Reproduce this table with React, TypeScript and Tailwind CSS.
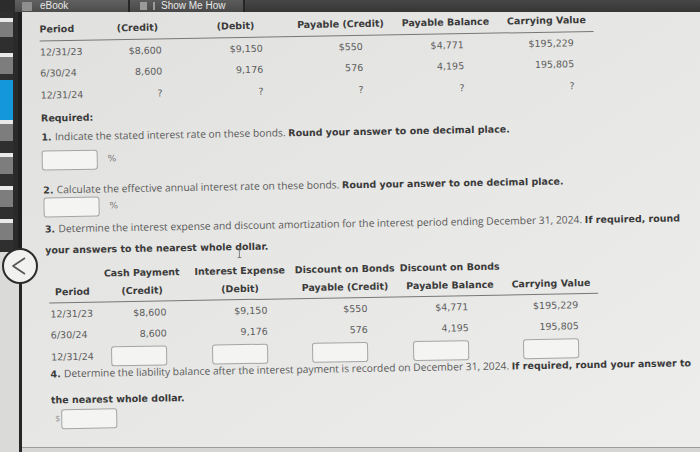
import React from 'react';

const strip: [string, number][] = [
  ['#2f2f2f', 6], ['#e9e9e9', 4], ['#7d7d7d', 15], ['#2f2f2f', 16],
  ['#e9e9e9', 4], ['#7d7d7d', 17], ['#2f2f2f', 6], ['#1597dc', 40],
  ['#e9e9e9', 4], ['#7d7d7d', 17], ['#2f2f2f', 12], ['#e9e9e9', 4],
  ['#7d7d7d', 17], ['#2f2f2f', 12], ['#e9e9e9', 4], ['#7d7d7d', 17],
  ['#2f2f2f', 12], ['#e9e9e9', 4], ['#7d7d7d', 17],
];

const grid = 'grid grid-cols-[54px_88px_108px_102px_108px_94px]';
const pads = ['', 'pr-[20px]', 'pr-[27px]', 'pr-[29px]', 'pr-[36px]', 'pr-[20px]'];

function Box({ className = '' }: { className?: string }) {
  return (
    <div
      className={`h-[20px] w-[56px] rounded-[3px] border border-[#a5a5a5] bg-[#f4f4f3] ${className}`}
    />
  );
}

function Head({ children }: { children: React.ReactNode }) {
  return (
    <div className="flex justify-center whitespace-nowrap font-bold text-[9.5px] text-[#3b3b3b]">
      {children}
    </div>
  );
}

function DataRow({ date, cells, datePad }: { date: string; cells: React.ReactNode[]; datePad: string }) {
  return (
    <div className={`${grid} h-[21.5px] items-center text-[9.5px] text-[#5c5c5c]`}>
      <div className={datePad}>{date}</div>
      {cells.map((c, i) => (
        <div key={i} className={`flex justify-end ${pads[i + 1]}`}>
          {c}
        </div>
      ))}
    </div>
  );
}

const q4 = ['Determine the ', 'liability balance ', 'after the interest ', 'payment is recorded ', 'on December 31, 2024. '];

export default function App() {
  return (
    <div className="flex h-[452px] w-[700px] flex-col overflow-hidden bg-[#2f2f2f] font-['DejaVu_Sans',sans-serif]">
      {/* top tab bar */}
      <div className="flex h-[12px] shrink-0 items-center overflow-hidden bg-gradient-to-b from-[#4a4a4a] to-[#333333] font-['Liberation_Sans',sans-serif] text-[10px] leading-[12px] text-[#e8e8e8]">
        <div className="h-full w-[15px] bg-[#2c2c2c]" />
        <div className="flex h-full w-[115px] items-center gap-[8px] border-r-2 border-[#262626] bg-gradient-to-b from-[#616161] to-[#4c4c4c] pl-[7px]">
          <div className="h-[9px] w-[10px] rounded-[1px] bg-[#8f8f8f]" />
          <span>eBook</span>
        </div>
        <div className="flex h-full w-[115px] items-center gap-[6px] border-r-2 border-[#262626] bg-gradient-to-b from-[#5c5c5c] to-[#484848] pl-[10px]">
          <div className="h-[8px] w-[7px] bg-[#9a9a9a]" />
          <div className="h-[8px] w-[2px] bg-[#9a9a9a]" />
          <span>Show Me How</span>
        </div>
        <div className="h-full flex-1 bg-gradient-to-b from-[#474747] to-[#363636]" />
      </div>

      <div className="relative flex flex-1">
        {/* left navigation strip */}
        <div className="flex w-[22px] shrink-0 flex-col">
          <div className="flex h-[240px]">
            <div className="flex w-[13px] flex-col">
              {strip.map(([c, h], i) => (
                <div key={i} style={{ background: c, height: h }} />
              ))}
              <div className="flex-1 bg-[#2f2f2f]" />
            </div>
            <div className="w-[5px] bg-[#2a2a2a]" />
            <div className="w-[4px] bg-[#1f1f1f]" />
          </div>
          <div className="flex flex-1">
            <div className="w-[19px] bg-[#dadad8]" />
            <div className="w-[3px] bg-[#262626]" />
          </div>
        </div>

        {/* collapse button */}
        <div className="absolute left-[2px] top-[236px] z-10 h-[36px] w-[36px] rounded-full border-2 border-[#2c2c2c] bg-[#f1f1f0]">
          <svg width="36" height="36" viewBox="0 0 36 36" className="absolute -left-[2px] -top-[2px]">
            <polyline points="23,10 11,18 23,26" fill="none" stroke="#555" strokeWidth="1.6" strokeLinejoin="round" />
          </svg>
        </div>

        {/* content */}
        <div className="flex flex-1 flex-col">
          <div className="relative flex-1 overflow-hidden bg-gradient-to-br from-[#e0e0de] via-[#e7e7e5] to-[#ededec]">
            <div className="h-full w-full origin-center -rotate-1 pl-[21px] pt-[2px]">
              {/* first table */}
              <div className="w-[554px]">
                <div className={`${grid} h-[20px] items-center`}>
                  <div className="font-bold text-[9.5px] text-[#3b3b3b]">Period</div>
                  <Head>(Credit)</Head>
                  <Head>(Debit)</Head>
                  <Head>Payable (Credit)</Head>
                  <Head>Payable Balance</Head>
                  <Head>Carrying Value</Head>
                </div>
                <div className="mt-[1px] h-px bg-[#777]" />
                <DataRow datePad="" date="12/31/23" cells={['$8,600', '$9,150', '$550', '$4,771', '$195,229']} />
                <DataRow datePad="" date="6/30/24" cells={['8,600', '9,176', '576', '4,195', '195,805']} />
                <DataRow datePad="" date="12/31/24" cells={['?', '?', '?', '?', '?']} />
              </div>

              <div className="mt-[4px] h-[16px] font-bold text-[9.5px] leading-[16px] text-[#3a3a3a]">Required:</div>

              <div className="mt-[1px] h-[16px] whitespace-nowrap leading-[16px] text-[#5a5a5a]">
                <span className="font-bold text-[9.5px] text-[#3a3a3a]">1. </span>
                <span className="font-['Open_Sans',sans-serif] text-[10.3px]">Indicate the stated interest rate on these bonds. </span>
                <span className="font-bold text-[9.5px] text-[#3a3a3a]">Round your answer to one decimal place.</span>
              </div>
              <div className="mt-[7px] flex items-center gap-[10px] text-[9px] text-[#777]">
                <Box />
                <span>%</span>
              </div>

              <div className="mt-[10.5px] h-[16px] whitespace-nowrap pl-[1px] leading-[16px] text-[#5a5a5a]">
                <span className="font-bold text-[9.5px] text-[#3a3a3a]">2. </span>
                <span className="font-['Open_Sans',sans-serif] text-[10.3px]">Calculate the effective annual interest rate on these bonds. </span>
                <span className="font-bold text-[9.5px] text-[#3a3a3a]">Round your answer to one decimal place.</span>
              </div>
              <div className="mt-[1px] flex items-center gap-[10px] pl-[1px] text-[9px] text-[#777]">
                <Box />
                <span>%</span>
              </div>

              <div className="mt-[2px] h-[16px] whitespace-nowrap pl-[2px] leading-[16px] text-[#5a5a5a]">
                <span className="font-bold text-[9.5px] text-[#3a3a3a]">3. </span>
                <span className="font-['Open_Sans',sans-serif] text-[10.3px]">
                  Determine the interest expense and discount amortization for the interest period ending December 31, 2024.{' '}
                </span>
                <span className="font-bold text-[9.5px] text-[#3a3a3a]">If required, round</span>
              </div>
              <div className="mt-[7px] h-[16px] whitespace-nowrap pl-[2px] font-bold text-[9.5px] leading-[16px] text-[#3a3a3a]">
                your answers to the nearest whole{' '}
                <span className="relative">
                  dollar.
                  <svg width="6" height="10" viewBox="0 0 6 10" className="absolute left-[1px] top-[7px]">
                    <path d="M1 0.5h4M3 0.5v9M1 9.5h4" stroke="#666" strokeWidth="0.8" fill="none" />
                  </svg>
                </span>
              </div>

              {/* second table */}
              <div className="mt-[8px] w-[554px]">
                <div className={`${grid} h-[16px] items-center`}>
                  <div />
                  <Head>Cash Payment</Head>
                  <Head>Interest Expense</Head>
                  <Head>Discount on Bonds</Head>
                  <Head>Discount on Bonds</Head>
                  <div />
                </div>
                <div className={`${grid} mt-[2px] h-[16px] items-center`}>
                  <div className="pl-[11px] font-bold text-[9.5px] text-[#3b3b3b]">Period</div>
                  <Head>(Credit)</Head>
                  <Head>(Debit)</Head>
                  <Head>Payable (Credit)</Head>
                  <Head>Payable Balance</Head>
                  <Head>Carrying Value</Head>
                </div>
                <div className="mt-[2px] ml-[5px] h-px bg-[#777]" />
                <DataRow datePad="pl-[6px]" date="12/31/23" cells={['$8,600', '$9,150', '$550', '$4,771', '$195,229']} />
                <DataRow datePad="pl-[6px]" date="6/30/24" cells={['8,600', '9,176', '576', '4,195', '195,805']} />
                <DataRow datePad="pl-[6px]" date="12/31/24" cells={[<Box />, <Box />, <Box />, <Box />, <Box />]} />
              </div>

              <div className="mt-[-2px] h-[12px] whitespace-pre pl-[5px] leading-[12px] text-[#5a5a5a]">
                <span className="font-bold text-[9.5px] text-[#3a3a3a]">4. </span>
                {q4.map((t) => (
                  <span key={t} className="font-['Open_Sans',sans-serif] text-[10.3px]">
                    {t}
                  </span>
                ))}
                <span className="font-bold text-[9.5px] text-[#3a3a3a]">If required, round your answer to</span>
              </div>
              <div className="mt-[14px] h-[16px] whitespace-nowrap pl-[5px] font-bold text-[9.5px] leading-[16px] text-[#3a3a3a]">
                the nearest whole dollar.
              </div>
              <div className="mt-[1px] flex items-center gap-[1px] pl-[9px] text-[8px] text-[#999]">
                <span>$</span>
                <Box />
              </div>
            </div>
          </div>
          <div className="h-[5px] shrink-0 border-t border-[#9c9c9a] bg-[#d6d6d4]" />
        </div>
      </div>
    </div>
  );
}
